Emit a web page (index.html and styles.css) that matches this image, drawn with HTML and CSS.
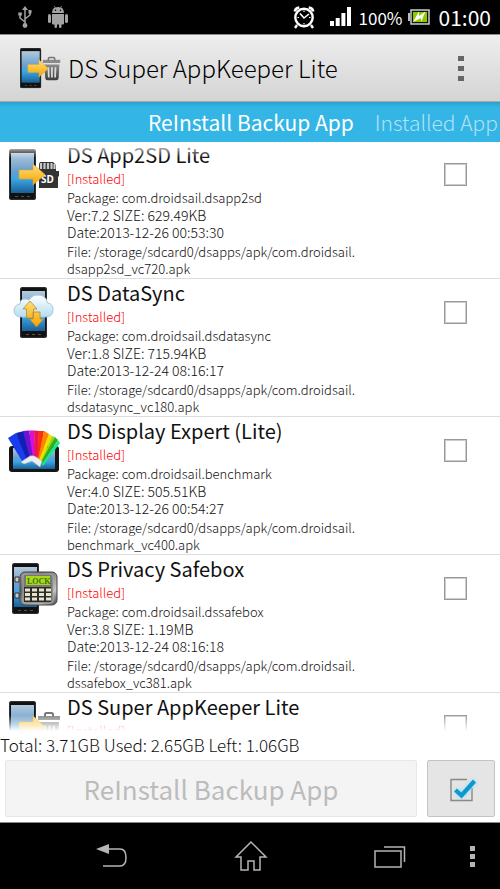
FILE: index.html
```html
<!DOCTYPE html>
<html lang="en">
<head>
<meta charset="utf-8">
<meta name="viewport" content="width=device-width, initial-scale=1">
<title>DS Super AppKeeper Lite</title>
<link rel="stylesheet" href="styles.css">
</head>
<body>
<svg class="defs" aria-hidden="true">
  <defs>
    <linearGradient id="screen" x1="0" y1="0" x2="0" y2="1">
      <stop offset="0" stop-color="#b4c9de"/><stop offset=".45" stop-color="#6a9fcb"/><stop offset=".65" stop-color="#3aa5e8"/><stop offset="1" stop-color="#1a6096"/>
    </linearGradient>
    <linearGradient id="gold" x1="0" y1="0" x2="0" y2="1">
      <stop offset="0" stop-color="#ffe07a"/><stop offset="1" stop-color="#f3a400"/>
    </linearGradient>
    <linearGradient id="steel" x1="0" y1="0" x2="0" y2="1">
      <stop offset="0" stop-color="#8b8b8b"/><stop offset="1" stop-color="#3c3c3c"/>
    </linearGradient>
    <linearGradient id="cloudfill" x1="0" y1="0" x2="0" y2="1">
      <stop offset="0" stop-color="#ffffff"/><stop offset="1" stop-color="#b5dcf2"/>
    </linearGradient>
    <linearGradient id="safe" x1="0" y1="0" x2="1" y2="1">
      <stop offset="0" stop-color="#999"/><stop offset=".3" stop-color="#666"/><stop offset=".75" stop-color="#c5c5c5"/><stop offset="1" stop-color="#444"/>
    </linearGradient>
    <symbol id="phone" viewBox="0 0 27 51">
      <rect x="0" y="0" width="27" height="51" rx="2.5" fill="#111"/>
      <rect x=".6" y=".6" width="25.800" height="49.800" rx="2" fill="none" stroke="#444" stroke-width=".7"/>
      <rect x="2" y="4" width="23" height="40" fill="url(#screen)"/>
      <path d="M6 47.500h3M12 47.500h3M18 47.500h3" stroke="#555"/>
    </symbol>
    <symbol id="keeper" viewBox="0 0 52 52">
      <use href="#phone" x="0" y="0" width="27" height="51"/>
      <path d="M29 17h22" stroke="#8a8a8a" stroke-width="4"/>
      <path d="M36 16v-2.500q0-1.500 1.500-1.500h5q1.500 0 1.500 1.500V16" fill="none" stroke="#777" stroke-width="2"/>
      <path d="M31 21h19l-1 17q-.2 3-3 3H35q-2.800 0-3-3z" fill="url(#steel)"/>
      <path d="M36 24.500l.5 13M40.500 24.500v13M45 24.500l-.5 13" stroke="#ddd" stroke-width="2.200"/>
      <path d="M10 21h14v-6l12 11-12 11v-6H10z" fill="url(#gold)" stroke="#e3a52c" stroke-width=".6"/>
    </symbol>
  </defs>
</svg>

<header class="status">
  <div class="status-group">
    <svg class="usb" viewBox="0 0 14 22" role="img" aria-label="USB"><g fill="none" stroke="#a3a3a3" stroke-width="1.500"><path d="M7 3v16M7 16l-5-4V8M7 13l5-4V6"/></g><path d="M7 0l3 4H4zM.3 6.500h3.600v3H.3zM10.500 4h3v3.500h-3z" fill="#a3a3a3"/><circle cx="7" cy="19.500" r="2.400" fill="#a3a3a3"/></svg>
    <svg class="droid" viewBox="0 0 20 22" role="img" aria-label="Debugging"><g fill="#a3a3a3"><path d="M4 7q.3-4.500 3-5.400L5.800.4l.5-.4 1.400 1.400q2.300-.6 4.600 0L13.700 0l.5.4L13 1.600Q15.700 2.500 16 7zM4 8h12v9.500q0 1-1 1h-1.500V21q0 1-1.300 1T11 21v-2.500H9V21q0 1-1.200 1T6.500 21v-2.500H5q-1 0-1-1z"/><rect x="0" y="8" width="3" height="9" rx="1.500"/><rect x="17" y="8" width="3" height="9" rx="1.500"/></g><circle cx="7.500" cy="4.300" r=".8"/><circle cx="12.500" cy="4.300" r=".8"/></svg>
  </div>
  <div class="status-group">
    <svg class="alarm" viewBox="0 0 22 23" role="img" aria-label="Alarm"><g fill="none" stroke="#fff"><circle cx="11" cy="11.500" r="8.700" stroke-width="2.400"/><path d="M1.800 5.500q.5-3.500 4.500-4M20.200 5.500q-.5-3.500-4.500-4" stroke-width="2.600"/><path d="M4 19l-2 3M18 19l2 3" stroke-width="2.400"/><path d="M7 7.500l4 4.500 5-4" stroke-width="1.600"/><path d="M11 4.500v1.500M11 17v1.500M4.500 11.500H6M16 11.500h1.500" stroke-width="1.200"/></g></svg>
    <svg class="signal" viewBox="0 0 22 20" role="img" aria-label="Signal"><path d="M0 14h4v5H0zM5.700 11h4v8h-4zM11.400 6h4v13h-4zM17 0h4v19h-4z" fill="#fff"/></svg>
    <span class="percent">100%</span>
    <svg class="battery" viewBox="0 0 22 16" role="img" aria-label="Charging"><path d="M0 4h2v8H0z" fill="#bbb"/><rect x="3" y="1" width="18" height="14" fill="#111" stroke="#ccc" stroke-width="1.500"/><rect x="5" y="3" width="14" height="10" fill="#8cc800"/><path d="M5 13l6-10.500v4.500l6.500-4.500L13 13V9z" fill="#fff"/></svg>
    <time class="clock">01:00</time>
  </div>
</header>

<div class="appbar">
  <svg class="app-icon" viewBox="0 0 52 52" aria-hidden="true"><use href="#keeper"/></svg>
  <h1 class="app-title">DS Super AppKeeper Lite</h1>
  <button class="overflow" type="button" aria-label="More options"><i></i><i></i><i></i></button>
</div>

<nav class="tabs">
  <a class="tab tab-current" href="#backup">ReInstall Backup App</a>
  <a class="tab" href="#installed">Installed App</a>
</nav>

<main class="list" id="backup">
  <ul class="rows">
    <li class="row">
      <svg class="row-icon" viewBox="0 0 52 52" aria-hidden="true"><use href="#phone" width="27" height="51"/><path d="M31 13h13l3 3v6h3v5l-1 1v11H30V15z" fill="#333"/><path d="M32 14v6M35.500 14v6M39 14v6M42.500 14v6M45.500 15v5" stroke="#c9c9c9" stroke-width="2.200"/><text class="sd-text" x="32" y="34">SD</text><path d="M10 21h14v-6l12 10.500L24 36v-6H10z" fill="url(#gold)" stroke="#e3a52c" stroke-width=".6"/></svg>
      <div class="info">
        <label class="name" for="app1">DS App2SD Lite</label>
        <p class="state">[Installed]</p>
        <p class="package">Package: com.droidsail.dsapp2sd</p>
        <p class="meta">Ver:7.2 SIZE: 629.49KB<br>Date:2013-12-26 00:53:30</p>
        <p class="file">File: /storage/sdcard0/dsapps/apk/com.droidsail.<br>dsapp2sd_vc720.apk</p>
      </div>
      <input class="check" type="checkbox" id="app1">
    </li>
    <li class="row">
      <svg class="row-icon" viewBox="0 0 52 52" aria-hidden="true"><use href="#phone" x="11" width="27" height="51"/><path d="M13 30Q5 30 5 23.500 5 18 11 17q0-5 5-5 3 0 4 1 3-5 9-5 8 0 9.500 8 5.500.5 5.500 7 0 7-8 7z" fill="url(#cloudfill)" stroke="#a4c9df"/><path d="M21 14l7 8h-3.500v9h-7v-9H14zM27.500 40l-7-8H24v-7h7v7h3.500z" fill="url(#gold)" stroke="#b8892d" stroke-width=".8"/></svg>
      <div class="info">
        <label class="name" for="app2">DS DataSync</label>
        <p class="state">[Installed]</p>
        <p class="package">Package: com.droidsail.dsdatasync</p>
        <p class="meta">Ver:1.8 SIZE: 715.94KB<br>Date:2013-12-24 08:16:17</p>
        <p class="file">File: /storage/sdcard0/dsapps/apk/com.droidsail.<br>dsdatasync_vc180.apk</p>
      </div>
      <input class="check" type="checkbox" id="app2">
    </li>
    <li class="row">
      <svg class="row-icon" viewBox="0 0 52 52" aria-hidden="true"><rect x="0" y="21" width="50" height="26" rx="3" fill="#151515"/><rect x="4" y="23" width="42" height="21" fill="url(#screen)"/><path d="M-1 13L7 8l14 26-8 2z" fill="#1a3cf0"/><path d="M7 8l8-2 8 28-5 1z" fill="#1020b0"/><path d="M14 6l6-.5L25 32l-4 2z" fill="#6a14d8"/><path d="M20 5.500h5L27 32l-3 1z" fill="#d812cc"/><path d="M25 5.500l5 .5-1 27-3-1z" fill="#ee1450"/><path d="M30 6h5l-5 28-2-1z" fill="#f8300c"/><path d="M35 6l5 3-9 27-2-2z" fill="#ff8400"/><path d="M40 9l3 2-11 27-2-3z" fill="#f0e000"/><path d="M43 11l3 1-13 27-1-2z" fill="#9cd810"/><path d="M46 12l3 3-16 25-1-3z" fill="#30b020"/><path d="M49 15l2 3-17 23-1-2z" fill="#18e890"/><path d="M12 37l9-6q3-1 6 1l6 4-2 6-8-6-8 3z" fill="#eee" stroke="#bbb" stroke-width=".6"/></svg>
      <div class="info">
        <label class="name" for="app3">DS Display Expert (Lite)</label>
        <p class="state">[Installed]</p>
        <p class="package">Package: com.droidsail.benchmark</p>
        <p class="meta">Ver:4.0 SIZE: 505.51KB<br>Date:2013-12-26 00:54:27</p>
        <p class="file">File: /storage/sdcard0/dsapps/apk/com.droidsail.<br>benchmark_vc400.apk</p>
      </div>
      <input class="check" type="checkbox" id="app3">
    </li>
    <li class="row">
      <svg class="row-icon" viewBox="0 0 52 52" aria-hidden="true"><use href="#phone" x="3" width="27" height="51"/><rect x="11" y="9" width="37" height="33" rx="5" fill="url(#safe)" stroke="#444"/><rect x="14" y="11" width="30" height="29" rx="3" fill="#777" stroke="#aaa"/><rect x="17" y="13" width="24" height="9" fill="#a8d818"/><text class="lock-text" x="18" y="20.500">LOCK</text><rect x="15" y="24" width="27" height="15" fill="#2c2c2c"/><path d="M16 27h26M16 31.500h26M16 36h26" stroke="#e8e4c8" stroke-width="3" stroke-dasharray="5 2"/><path d="M6 14h4v5H6zM6 30h4v5H6z" fill="#ccc" stroke="#333"/></svg>
      <div class="info">
        <label class="name" for="app4">DS Privacy Safebox</label>
        <p class="state">[Installed]</p>
        <p class="package">Package: com.droidsail.dssafebox</p>
        <p class="meta">Ver:3.8 SIZE: 1.19MB<br>Date:2013-12-24 08:16:18</p>
        <p class="file">File: /storage/sdcard0/dsapps/apk/com.droidsail.<br>dssafebox_vc381.apk</p>
      </div>
      <input class="check" type="checkbox" id="app4">
    </li>
    <li class="row">
      <svg class="row-icon" viewBox="0 0 52 52" aria-hidden="true"><use href="#keeper"/></svg>
      <div class="info">
        <label class="name" for="app5">DS Super AppKeeper Lite</label>
        <p class="state">[Installed]</p>
      </div>
      <input class="check" type="checkbox" id="app5">
    </li>
  </ul>
</main>

<p class="storage">Total: 3.71GB Used: 2.65GB Left: 1.06GB</p>
<div class="actions">
  <button class="reinstall" type="button" disabled>ReInstall Backup App</button>
  <button class="select-all" type="button" aria-label="Select all">
    <svg viewBox="0 0 32 32" aria-hidden="true"><path d="M22 6.500H6v21h21V15" fill="none" stroke="#888" stroke-width="1.400"/><path class="tick" d="M10.500 17l6 5.500L29.500 8" fill="none" stroke="#0d98d0" stroke-width="4.200"/></svg>
  </button>
</div>

<footer class="navbar">
  <button type="button" aria-label="Back"><svg viewBox="0 0 34 26"><path d="M12 6h13q6 0 6 8.500T25 23H8" fill="none" stroke="#b5b5b5" stroke-width="1.500"/><path d="M1 6l13-5v10z" fill="#b5b5b5"/></svg></button>
  <button type="button" aria-label="Home"><svg viewBox="0 0 34 32"><path d="M17 2L2 17h5v13h7v-9h6v9h6V17h6z" fill="none" stroke="#b5b5b5" stroke-width="1.500"/></svg></button>
  <button type="button" aria-label="Recent apps"><svg viewBox="0 0 34 26"><path d="M2 8h26v16H2zM11 4h20.500v15" fill="none" stroke="#b5b5b5" stroke-width="1.500"/></svg></button>
  <button class="nav-more" type="button" aria-label="Menu"><i></i><i></i><i></i></button>
</footer>
</body>
</html>
```

FILE: styles.css
```css
* { box-sizing: border-box; }

body {
  margin: 0;
  height: 100vh;
  display: flex;
  flex-direction: column;
  overflow: hidden;
  background: #fff;
  color: #222;
  font-family: "Noto Sans CJK SC", "Noto Sans", sans-serif;
  font-weight: 300;
}

h1, p, ul { margin: 0; padding: 0; }
button { margin: 0; padding: 0; border: 0; background: none; font: inherit; }
svg { display: block; flex: none; overflow: visible; }
.defs { position: absolute; width: 0; height: 0; }

.status {
  flex: none;
  display: flex;
  justify-content: space-between;
  height: 34px;
  padding: 0 9px 0 18px;
  background: #000;
  color: #fff;
  font-weight: 400;
}
.status-group { display: flex; align-items: center; }
.usb { width: 14px; height: 22px; margin-right: 16px; }
.droid { width: 20px; height: 22px; }
.alarm { width: 22px; height: 23px; margin-right: 15px; }
.signal { width: 22px; height: 20px; margin-right: 7px; }
.percent { font-size: 17px; }
.battery { width: 22px; height: 16px; margin: 0 9px 0 5px; }
.clock { font-size: 21px; }

.appbar {
  flex: none;
  display: flex;
  align-items: center;
  height: 68px;
  padding: 0 24px 0 20px;
  border-top: 1px solid #8d8d8d;
  border-bottom: 1px solid #aaa;
  background: linear-gradient(#eee, #d4d4d4);
  color: #000;
}
.app-icon { width: 41px; height: 41px; margin-right: 7px; }
.app-title { flex: 1; font-size: 24px; font-weight: 300; line-height: 34px; white-space: nowrap; }
.overflow { display: grid; gap: 5px; width: 30px; justify-items: center; }
.overflow i { width: 6px; height: 5px; background: #666; }

.tabs {
  flex: none;
  display: flex;
  gap: 21px;
  height: 40px;
  padding-left: 148px;
  overflow: hidden;
  background: linear-gradient(#2b9fcd, #33b5e5 5px);
  line-height: 40px;
  white-space: nowrap;
}
.tab { color: #b5e1f4; font-size: 21px; text-decoration: none; }
.tab-current { color: #fff; font-weight: 400; }

.list { position: relative; flex: 1; min-height: 0; overflow: hidden; }
.list::before, .list::after {
  content: "";
  position: absolute;
  left: 0;
  right: 0;
  height: 16px;
  pointer-events: none;
}
.list::before { top: 0; background: linear-gradient(#fff, rgba(255, 255, 255, 0)); }
.list::after { bottom: 0; background: linear-gradient(rgba(255, 255, 255, 0), #fff); }

.rows { margin-top: -1px; list-style: none; }
.row {
  display: flex;
  align-items: flex-start;
  height: 138px;
  padding: 0 33px 0 9px;
  border-bottom: 1px solid #ddd;
}
.row-icon { width: 52px; height: 52px; margin: 8px 6px 0 0; }
.info { flex: 1; font-size: 13px; line-height: 17px; color: #111; }
.name { display: block; padding-bottom: 1px; font-size: 20px; font-weight: 400; line-height: 28px; }
.state { margin-bottom: 2px; color: #f00; }
.package { margin-bottom: 1px; }
.meta { margin-bottom: 2px; font-size: 14px; }
.check {
  appearance: none;
  width: 23px;
  height: 23px;
  margin: 22px 0 0;
  border: 1px solid #999;
  box-shadow: inset 0 0 0 1px #ccc;
  background: #fff;
}
.sd-text { fill: #fff; font: 700 10px "Noto Sans", sans-serif; }
.lock-text { fill: #3f7010; font: 700 8px "Liberation Serif", serif; }

.storage { flex: none; height: 29px; font-size: 17px; line-height: 27px; color: #111; }
.actions {
  flex: none;
  display: flex;
  gap: 10px;
  height: 63px;
  padding: 0 5px 5px;
  border-bottom: 1px solid #888;
}
.reinstall {
  flex: 1;
  border: 1px solid #e8e8e8;
  border-radius: 2px;
  background: #f4f4f4;
  color: #bcbcbc;
  font-size: 26px;
  font-weight: 400;
}
.select-all {
  display: grid;
  place-items: center;
  width: 68px;
  border: 1px solid #c4c4c4;
  border-radius: 2px;
  background: #e5e5e5;
}
.select-all svg { width: 32px; height: 32px; }
.tick { filter: drop-shadow(0 0 2px #8fdcf8); }

.navbar {
  flex: none;
  display: grid;
  grid-template-columns: 139fr 139fr 139fr 27fr;
  height: 66px;
  padding: 0 14px 0 42px;
  background: #000;
}
.navbar button { display: grid; place-items: center; place-content: center; }
.navbar svg { width: 34px; }
.navbar .nav-more { gap: 3px; }
.nav-more i { width: 5px; height: 5px; background: #b5b5b5; }
```
